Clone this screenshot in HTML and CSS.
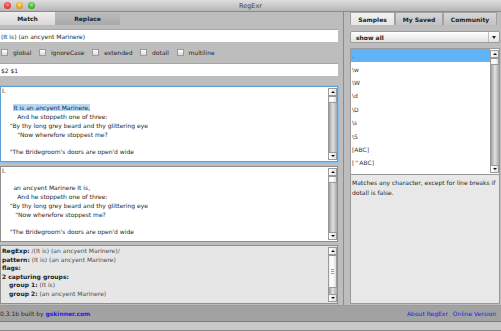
FILE: index.html
```html
<!DOCTYPE html>
<html lang="en">
<head>
    <meta charset="UTF-8">
    <title>RegExr</title>
    <link rel="stylesheet" href="styles.css">
</head>
<body>
    <div class="titlebar">
        <div class="lights">
            <span class="light red"></span>
            <span class="light yellow"></span>
            <span class="light green"></span>
        </div>
        <div class="title">RegExr</div>
        <div></div>
    </div>

    <div class="content">
        <div class="left">
            <div class="tabs">
                <div class="tab active match">Match</div>
                <div class="tab replace">Replace</div>
            </div>
            <div class="field pattern">(It is) (an ancyent Marinere)</div>
            <div class="options">
                <label class="option"><span class="box"></span>global</label>
                <label class="option"><span class="box"></span>ignoreCase</label>
                <label class="option"><span class="box"></span>extended</label>
                <label class="option"><span class="box"></span>dotall</label>
                <label class="option"><span class="box"></span>multiline</label>
            </div>
            <div class="field replace-field">$2 $1</div>

            <div class="textbox source focus">
<div class="text">I.

      <span class="hit">It is an ancyent Marinere,</span>
        And he stoppeth one of three:
    "By thy long grey beard and thy glittering eye
        "Now wherefore stoppest me?

    "The Bridegroom's doors are open'd wide</div>
                <div class="scroll">
                    <div class="arrow up"></div>
                    <div class="thumb"></div>
                    <div class="track"></div>
                    <div class="arrow down"></div>
                </div>
            </div>

            <div class="textbox output">
<div class="text">I.

      an ancyent Marinere It is,
        And he stoppeth one of three:
    "By thy long grey beard and thy glittering eye
       "Now wherefore stoppest me?

    "The Bridegroom's doors are open'd wide</div>
                <div class="scroll">
                    <div class="arrow up"></div>
                    <div class="thumb"></div>
                    <div class="track"></div>
                    <div class="arrow down"></div>
                </div>
            </div>

            <div class="textbox results">
                <div class="text">
                    <div><b>RegExp:</b> /(It is) (an ancyent Marinere)/</div>
                    <div><b>pattern:</b> (It is) (an ancyent Marinere)</div>
                    <div><b>flags:</b></div>
                    <div><b>2 capturing groups:</b></div>
                    <div class="group"><b>group 1:</b> (It is)</div>
                    <div class="group"><b>group 2:</b> (an ancyent Marinere)</div>
                </div>
                <div class="scroll">
                    <div class="arrow up"></div>
                    <div class="thumb big"><span class="grip"></span></div>
                    <div class="track"></div>
                    <div class="arrow down"></div>
                </div>
            </div>
        </div>

        <div class="splitter"></div>

        <div class="right">
            <div class="tabs">
                <div class="tab active samples">Samples</div>
                <div class="tab saved">My Saved</div>
                <div class="tab community">Community</div>
            </div>
            <div class="select">
                <span class="select-label">show all</span>
                <span class="select-arrow"></span>
            </div>
            <div class="list">
                <div class="items">
                    <div class="item sel">.</div>
                    <div class="item">\w</div>
                    <div class="item">\W</div>
                    <div class="item">\d</div>
                    <div class="item">\D</div>
                    <div class="item">\s</div>
                    <div class="item">\S</div>
                    <div class="item">[ABC]</div>
                    <div class="item">[^ABC]</div>
                    <div class="item">[A-Z]</div>
                </div>
                <div class="scroll">
                    <div class="arrow up"></div>
                    <div class="thumb"></div>
                    <div class="track"></div>
                    <div class="arrow down"></div>
                </div>
            </div>
            <div class="desc">Matches any character, except for line breaks if dotall is false.</div>
        </div>
    </div>

    <div class="footer">
        <div class="credit">0.3.1b built by <a class="link bold">gskinner.com</a></div>
        <div class="links">
            <a class="link">About RegExr</a>
            <a class="link">Online Version</a>
        </div>
    </div>
    <div class="statusbar"></div>
</body>
</html>
```

FILE: styles.css
```css
* {
    box-sizing: border-box;
}
body {
    margin: 0;
    width: 501px;
    height: 331px;
    overflow: hidden;
    background-color: #bdbdbd;
    font-family: "DejaVu Sans", Verdana, sans-serif;
    font-size: 6px;
    color: #262626;
}

/* window title */
.titlebar {
    height: 12px;
    display: grid;
    grid-template-columns: 1fr auto 1fr;
    align-items: center;
    background: linear-gradient(#dedede, #b6b6b6);
    border-bottom: 1px solid #8a8a8a;
}
.lights {
    display: flex;
    gap: 5px;
    padding-left: 4px;
}
.light {
    width: 7px;
    height: 7px;
    border-radius: 50%;
}
.red { background: radial-gradient(circle at 50% 35%, #f88 0, #d9342c 70%); }
.yellow { background: radial-gradient(circle at 50% 35%, #fd8 0, #dc9a1c 70%); }
.green { background: radial-gradient(circle at 50% 35%, #9e8 0, #3fa12e 70%); }
.title {
    font-size: 6.5px;
    color: #444;
}

/* main area */
.content {
    display: flex;
    height: 293px;
}
.left {
    width: 343px;
    padding-right: 5px;
    display: flex;
    flex-direction: column;
}
.splitter {
    width: 1px;
    background-color: #8c8c8c;
}
.right {
    flex: 1;
    padding: 0 1px 0 6px;
    display: flex;
    flex-direction: column;
}

/* tabs */
.tabs {
    display: flex;
    height: 13px;
}
.tab {
    display: flex;
    align-items: center;
    justify-content: center;
    font-weight: bold;
    color: #222;
    background: linear-gradient(#bdbdbd, #a9a9a9);
}
.tab.active {
    background: linear-gradient(#eeeeee, #d8d8d8);
}
.match { width: 55px; }
.replace { width: 65px; }
.right .tab {
    background: linear-gradient(#d6d6d6, #c2c2c2);
    border: 1px solid #a2a2a2;
    border-bottom: none;
}
.right .tab.active {
    background: linear-gradient(#f2f2f2, #e4e4e4);
}
.samples { width: 45px; }
.saved { width: 48px; }
.community { width: 54px; }

/* inputs */
.field {
    height: 13px;
    display: flex;
    align-items: center;
    padding-left: 1px;
    background-color: #fff;
    border-top: 1px solid #a6a6a6;
}
.pattern {
    margin-top: 4px;
}
.options {
    height: 20px;
    display: flex;
    align-items: center;
    gap: 7.6px;
    padding-left: 1px;
}
.option {
    display: flex;
    align-items: center;
    gap: 5px;
}
.box {
    width: 7px;
    height: 7px;
    border: 1px solid #9a9a9a;
    background: linear-gradient(#ffffff, #dadada);
}
.replace-field {
    margin-top: 1px;
}

/* text boxes */
.textbox {
    display: flex;
    background-color: #fff;
    border: 1px solid #8e8e8e;
}
.textbox .text {
    flex: 1;
    padding: 0 1px;
    white-space: pre;
    line-height: 8.7px;
    color: #262626;
    overflow: hidden;
}
.source {
    margin-top: 10px;
    height: 76px;
}
.focus {
    border-color: #5f9fdb;
    box-shadow: 0 0 0 1px #8dbbe8;
}
.hit {
    background-color: #b8d9f6;
}
.output {
    margin-top: 4px;
    height: 76px;
}
.results {
    margin-top: 3px;
    height: 59px;
    background-color: #e6e6e6;
}
.results .text {
    white-space: normal;
    padding-top: 1px;
    line-height: 8.6px;
    color: #4a4a4a;
}
.results b {
    color: #222;
}
.group {
    padding-left: 7px;
}

/* scrollbars */
.scroll {
    width: 9px;
    display: flex;
    flex-direction: column;
    padding: 1px 0;
}
.arrow {
    height: 8px;
    border: 1px solid #9a9a9a;
    background: linear-gradient(90deg, #ffffff, #e2e2e2);
    display: flex;
    align-items: center;
    justify-content: center;
}
.arrow::before {
    content: "";
    border-left: 2px solid transparent;
    border-right: 2px solid transparent;
    border-bottom: 2px solid #111;
}
.arrow.down::before {
    border-bottom: none;
    border-top: 2px solid #111;
}
.thumb {
    height: 7px;
    border: 1px solid #9a9a9a;
    background: linear-gradient(90deg, #f0f0f0, #ffffff 50%, #dcdcdc);
}
.thumb.big {
    height: 33px;
    display: flex;
    align-items: center;
    justify-content: center;
}
.grip {
    width: 3px;
    height: 5px;
    border-top: 1px solid #999;
    border-bottom: 1px solid #999;
    background: linear-gradient(#fff 40%, #999 40%, #999 60%, #fff 60%);
}
.track {
    flex: 1;
    background: linear-gradient(90deg, #8e8e8e, #c4c4c4 35%, #e2e2e2 55%, #a6a6a6);
}

/* right column */
.select {
    margin-top: 6px;
    height: 12px;
    display: flex;
    align-items: center;
    border: 1px solid #9c9c9c;
    border-radius: 2px;
    background: linear-gradient(#ffffff, #e2e2e2);
}
.select-label {
    flex: 1;
    padding-left: 5px;
    font-weight: bold;
    color: #222;
}
.select-arrow {
    width: 11px;
    height: 100%;
    border-left: 1px solid #c0c0c0;
    display: flex;
    align-items: center;
    justify-content: center;
}
.select-arrow::before {
    content: "";
    border-left: 2px solid transparent;
    border-right: 2px solid transparent;
    border-top: 3px solid #222;
}
.list {
    margin-top: 5px;
    height: 127px;
    display: flex;
    background-color: #fff;
    border: 1px solid #999;
}
.items {
    flex: 1;
    overflow: hidden;
}
.item {
    height: 13.4px;
    display: flex;
    align-items: center;
    padding-left: 1px;
    color: #333;
}
.item.sel {
    background-color: #5fb3f6;
}
.desc {
    height: 129px;
    background-color: #e8e8e8;
    border: 1px solid #999;
    border-top: none;
    padding: 3px 1px;
    line-height: 10px;
}

/* footer */
.footer {
    height: 17px;
    display: flex;
    align-items: center;
    background-color: #a2a2a2;
    border-top: 1px solid #9a9a9a;
    border-bottom: 1px solid #7c7c7c;
}
.credit {
    flex: 1;
    white-space: nowrap;
}
.links {
    width: 94px;
    display: flex;
    gap: 5px;
    white-space: nowrap;
    overflow: hidden;
}
.link {
    color: #1d1de6;
}
.bold {
    font-weight: bold;
}
.statusbar {
    height: 9px;
    background-color: #c8c8c8;
    border-bottom: 1px solid #8a8a8a;
}
```
